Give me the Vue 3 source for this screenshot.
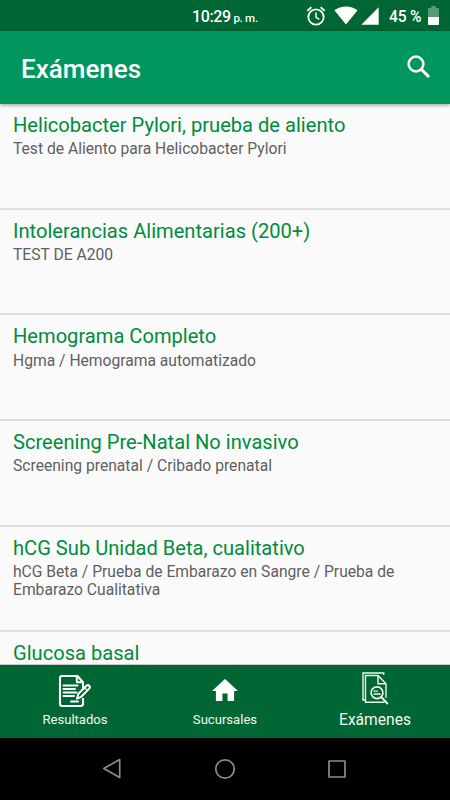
<script setup>
const exams = [
  { name: 'Helicobacter Pylori, prueba de aliento', detail: 'Test de Aliento para Helicobacter Pylori' },
  { name: 'Intolerancias Alimentarias (200+)', detail: 'TEST DE A200' },
  { name: 'Hemograma Completo', detail: 'Hgma / Hemograma automatizado' },
  { name: 'Screening Pre-Natal No invasivo', detail: 'Screening prenatal / Cribado prenatal' },
  { name: 'hCG Sub Unidad Beta, cualitativo', detail: 'hCG Beta / Prueba de Embarazo en Sangre / Prueba de Embarazo Cualitativa' },
  { name: 'Glucosa basal', detail: '' },
]
</script>

<template>
  <div class="screen">
    <div class="status">
      <div class="clock"><span class="time">10:29</span><span class="ampm">p. m.</span></div>
      <svg class="alarm" viewBox="0 0 20 20" fill="none" stroke="#fff">
        <circle cx="10" cy="11" r="7.7" stroke-width="1.8" />
        <path d="M10 6.6v4.8l3.3 2" stroke-width="1.5" />
        <path d="M1.3 4.7 5.4 1.3M18.7 4.7 14.6 1.3" stroke-width="1.8" />
      </svg>
      <svg class="wifi" viewBox="0 0 24 19" fill="#fff"><path d="M12 18.6 .4 4.3C7-.9 17-.9 23.6 4.3Z" /></svg>
      <svg class="signal" viewBox="0 0 18 18" fill="#fff"><path d="M17.7.3v17.4H.3Z" /></svg>
      <span class="percent">45 %</span>
      <svg class="battery" viewBox="0 0 11 19">
        <path d="M3.3 0h4.4v2H10q1 0 1 1v8H0V3q0-1 1-1h2.3Z" fill="#559b78" />
        <path d="M0 11h11v7q0 1-1 1H1q-1 0-1-1Z" fill="#fff" />
      </svg>
    </div>

    <header class="appbar">
      <h1>Exámenes</h1>
      <svg class="search" viewBox="0 0 24 24" fill="none" stroke="#fff">
        <circle cx="9" cy="9" r="7.4" stroke-width="2.5" />
        <path d="m14.4 14.4 7.6 7.6" stroke-width="3" />
      </svg>
    </header>

    <main class="list">
      <article v-for="exam in exams" :key="exam.name" class="row">
        <h2>{{ exam.name }}</h2>
        <p>{{ exam.detail }}</p>
      </article>
    </main>

    <nav class="tabs">
      <div class="tab">
        <svg class="doc" viewBox="0 0 34 34" fill="none" stroke="#fff" stroke-linejoin="round">
          <path d="M25 14.5V8.3L19.5 2H4.2Q2 2 2 4.2v25.6Q2 32 4.2 32h18.6q2.2 0 2.2-2.2V24" stroke-width="2.1" />
          <path d="M18.8 2v6.3H25" stroke-width="2" />
          <path d="M5.5 11.6h14M5.5 15.1h11.5M5.5 18.6h13M5.5 22.1h10.5M13 27.6h7" stroke-width="2" stroke-linecap="round" />
          <path d="m19 24.6 1.4-4.8 8-8q1.5-1.3 2.8 0t0 2.8l-8 8.2Z" stroke-width="2" fill="#006634" />
          <path d="m26.4 13.6 2.8 2.8" stroke-width="1.3" />
        </svg>
        <span>Resultados</span>
      </div>
      <div class="tab">
        <svg class="home" viewBox="0 0 26 22" fill="#fff"><path d="M10.4 22v-7.6h5.2V22h6.5V12H26L13 0 0 12h3.9v10Z" /></svg>
        <span>Sucursales</span>
      </div>
      <div class="tab active">
        <svg class="exam" viewBox="0 0 27 33" fill="none" stroke="#f1f7e9" stroke-width="1.4">
          <path d="M21.7 3V1H1v27h2.5" />
          <path d="M3.5 28V3.5H16l8 8.3v14M3.5 28v2.3h19" />
          <path d="M16 3.7v8.1h7.8" />
          <circle cx="15" cy="20.7" r="5.9" stroke-width="1.7" />
          <path d="m19.3 25 6.5 7" stroke-width="1.9" />
          <path d="M11.6 19.2h4.2M11.6 22h7" stroke-width="1.3" />
        </svg>
        <span>Exámenes</span>
      </div>
    </nav>

    <div class="system">
      <svg viewBox="0 0 20 22"><path d="M17.7 1.5v18L1.8 10.5Z" /></svg>
      <svg viewBox="0 0 20 22"><circle cx="10" cy="11" r="9.2" /></svg>
      <svg viewBox="0 0 20 22"><rect x="2" y="3" width="16" height="16" /></svg>
    </div>
  </div>
</template>

<style>
body { margin: 0; overflow: hidden; }
</style>

<style scoped>
* { box-sizing: border-box; }
svg { display: block; flex: none; }
.screen {
  width: 450px;
  height: 800px;
  display: flex;
  flex-direction: column;
  overflow: hidden;
  background: #fafafa;
  font-family: Roboto, sans-serif;
}
.status {
  flex: none;
  height: 31px;
  display: flex;
  align-items: center;
  background: #006634;
  color: #fff;
  padding-left: 192px;
}
.clock { width: 114px; font-weight: 500; white-space: nowrap; padding-top: 2px; }
.time { font-size: 16px; letter-spacing: -.4px; }
.ampm { font-size: 11.6px; letter-spacing: -.3px; margin-left: 2.8px; }
.alarm { width: 20px; height: 20px; }
.wifi { width: 24px; height: 19px; margin-left: 8px; }
.signal { width: 18px; height: 18px; margin: 1px 0 0 3px; }
.percent { width: 38px; margin-left: 10px; font-size: 15.6px; letter-spacing: -.2px; font-weight: 500; padding-top: 2px; white-space: nowrap; }
.battery { width: 11px; height: 19px; margin-left: 1px; }
.appbar {
  flex: none;
  position: relative;
  z-index: 1;
  height: 73px;
  display: flex;
  align-items: center;
  justify-content: space-between;
  padding: 2px 19px 0 21px;
  background: #00965e;
  color: #fff;
  box-shadow: 0 1px 4px rgba(0, 0, 0, .4);
}
h1 { margin: 0; font-size: 26px; font-weight: 500; }
.search { width: 24px; height: 24px; margin-top: -3px; }
.list { flex: 1; min-height: 0; overflow: hidden; border-bottom: 1px solid #ccc; }
.row {
  height: 105.67px;
  padding: 9px 13px 0;
  border-bottom: 2px solid #dedede;
}
h2 { margin: 0; font-size: 20.12px; line-height: 24.4px; font-weight: 400; color: #008c3c; }
p { margin: 3px 0 0; font-size: 15.65px; line-height: 18.3px; color: #5f5f5f; }
.tabs { flex: none; height: 73px; display: flex; background: #006634; color: #f3f8f2; }
.tab { flex: 1; display: flex; flex-direction: column; align-items: center; font-size: 13.1px; line-height: 16px; }
.tab span { margin-top: auto; padding-bottom: 10px; }
.doc { width: 34px; height: 34px; margin: 9px 0 0 0; }
.home { width: 26px; height: 22px; margin-top: 14px; }
.exam { width: 27px; height: 33px; margin-top: 7px; }
.active { font-size: 15.6px; }
.active span { line-height: 18px; padding-bottom: 9px; }
.system {
  flex: none;
  height: 62px;
  display: flex;
  align-items: center;
  justify-content: center;
  gap: 92.5px;
  padding-right: 1px;
  background: #000;
}
.system svg { width: 20px; height: 22px; fill: none; stroke: #8c8c8c; stroke-width: 1.7; stroke-linejoin: round; }
</style>
